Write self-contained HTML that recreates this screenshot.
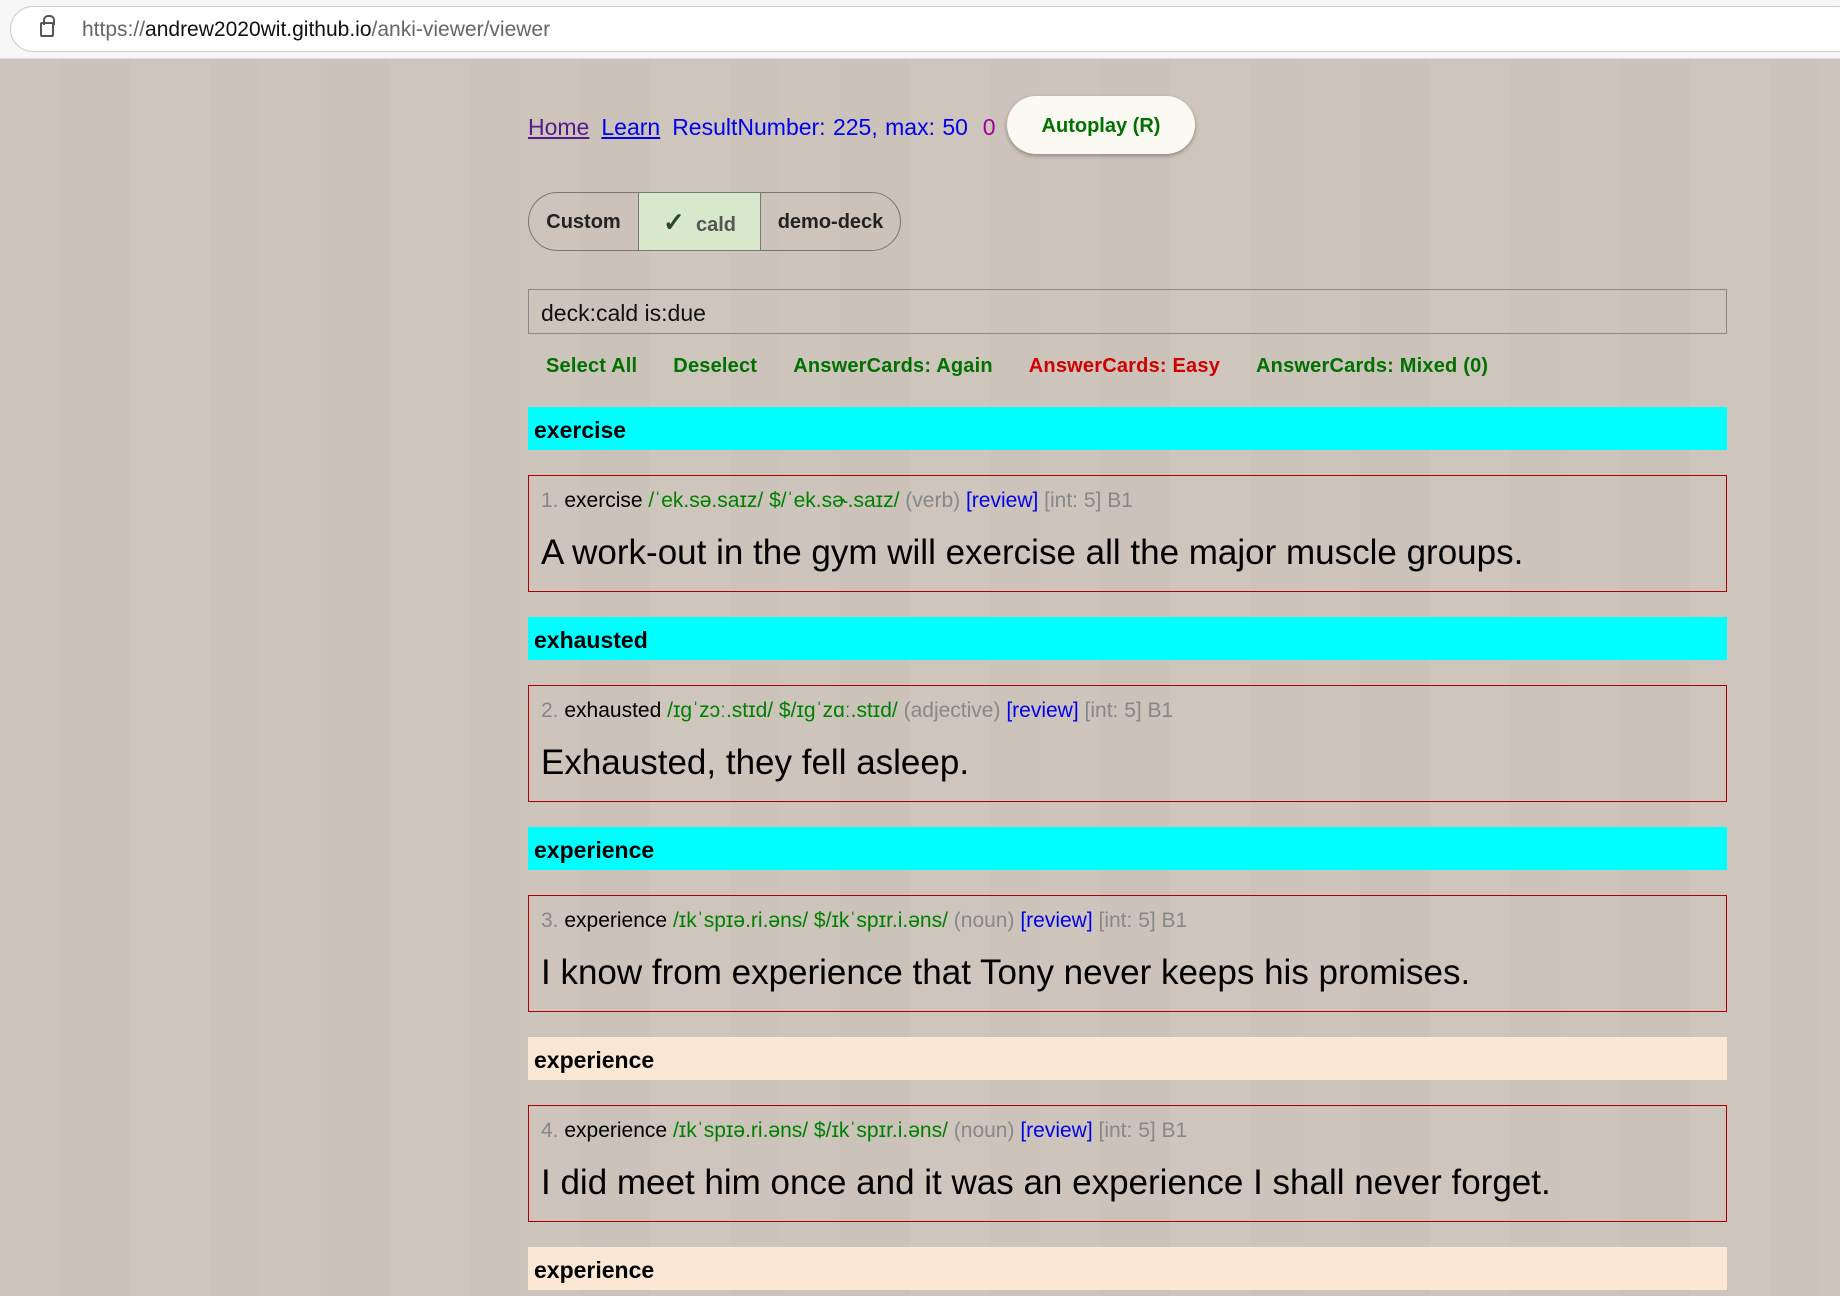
<!DOCTYPE html>
<html><head><meta charset="utf-8"><style>
*{box-sizing:border-box}
body{margin:0;width:1840px;height:1296px;overflow:hidden;font-family:"Liberation Sans",sans-serif;
background:repeating-linear-gradient(90deg,#cdc5bb 0 60px,#cbc3b9 60px 130px,#cec6bc 130px 210px,#ccc4ba 210px 260px);}
.bar{position:absolute;left:0;top:0;width:1840px;height:59px;background:#f7f7f7;border-bottom:1px solid #ddd}
.addr{position:absolute;left:10px;top:6px;width:1850px;height:46px;border:1px solid #ccc;border-radius:23px;background:#fff}
.url{position:absolute;left:82px;top:18px;font-size:21px;color:#666}
.url b{font-weight:normal;color:#111}
.lock{position:absolute;left:40px;width:14px;border:2px solid #555;border-radius:2px;top:22px;height:15px}
.lock:before{content:"";position:absolute;left:1px;top:-9px;width:8px;height:8px;border:2px solid #555;border-bottom:none;border-radius:5px 5px 0 0}
.nav{position:absolute;left:528px;top:114px;font-size:23px;color:#0000ee;word-spacing:1px}
.nav a{color:#0000ee;text-decoration:underline;margin-right:12px}
.auto{position:absolute;left:1007px;top:96px;width:188px;height:58px;border-radius:29px;background:#fafaf2;box-shadow:0 2px 4px rgba(0,0,0,.3);color:#007000;font-weight:bold;font-size:20px;text-align:center;line-height:60px}
.seg{position:absolute;left:528px;top:192px;width:373px;height:59px;border:1px solid #777;border-radius:30px;overflow:hidden;display:flex;font-weight:bold;font-size:20px;color:#222}
.seg div{line-height:59px;text-align:center}
.inp{position:absolute;left:528px;top:289px;width:1199px;height:45px;border:1px solid #888;font-size:23px;padding-left:12px;line-height:47px;color:#111}
.acts{position:absolute;left:546px;top:355px;font-size:20px;font-weight:bold;color:#007000;white-space:nowrap;letter-spacing:0.2px}
.acts span{margin-right:36px}
.h{position:absolute;left:528px;width:1199px;height:43px;background:#00ffff;font-weight:bold;font-size:23px;padding-left:6px;line-height:46px;color:#000}
.h.b{background:#fae8d4}
.c{position:absolute;left:528px;width:1199px;height:117px;border:1px solid #a00;padding-left:12px}
.m{position:absolute;top:13px;left:12px;font-size:21px;color:#888;white-space:nowrap}
.m .w{color:#000}.m .p{color:#008000}.m .r{color:#0000ee}
.s{position:absolute;top:57px;left:12px;font-size:35px;color:#000;white-space:nowrap}
</style></head><body>
<div class="bar"><div class="addr"></div><div class="lock"></div><div class="url">https://<b>andrew2020wit.github.io</b>/anki-viewer/viewer</div></div>
<div class="nav"><a style="color:#551a8b">Home</a><a>Learn</a>ResultNumber: 225, max: 50 &nbsp;<span style="color:#a000a0">0</span></div>
<div class="auto">Autoplay (R)</div>
<div class="seg"><div style="width:110px;border-right:1px solid #777">Custom</div><div style="width:122px;background:#d8e8cc;border-right:1px solid #777;color:#555"><span style="color:#2a4a2a;font-size:26px">✓</span>&nbsp;&nbsp;cald</div><div style="flex:1">demo-deck</div></div>
<div class="inp">deck:cald is:due</div>
<div class="acts"><span>Select All</span><span>Deselect</span><span>AnswerCards: Again</span><span style="color:#d00000">AnswerCards: Easy</span><span>AnswerCards: Mixed (0)</span></div>

<div class="h" style="top:407px">exercise</div>
<div class="c" style="top:475px"><div class="m">1. <span class="w">exercise</span> <span class="p">/ˈek.sə.saɪz/ $/ˈek.sɚ.saɪz/</span> (verb) <span class="r">[review]</span> [int: 5] B1</div><div class="s">A work-out in the gym will exercise all the major muscle groups.</div></div>

<div class="h" style="top:617px">exhausted</div>
<div class="c" style="top:685px"><div class="m">2. <span class="w">exhausted</span> <span class="p">/ɪɡˈzɔː.stɪd/ $/ɪɡˈzɑː.stɪd/</span> (adjective) <span class="r">[review]</span> [int: 5] B1</div><div class="s">Exhausted, they fell asleep.</div></div>

<div class="h" style="top:827px">experience</div>
<div class="c" style="top:895px"><div class="m">3. <span class="w">experience</span> <span class="p">/ɪkˈspɪə.ri.əns/ $/ɪkˈspɪr.i.əns/</span> (noun) <span class="r">[review]</span> [int: 5] B1</div><div class="s">I know from experience that Tony never keeps his promises.</div></div>

<div class="h b" style="top:1037px">experience</div>
<div class="c" style="top:1105px"><div class="m">4. <span class="w">experience</span> <span class="p">/ɪkˈspɪə.ri.əns/ $/ɪkˈspɪr.i.əns/</span> (noun) <span class="r">[review]</span> [int: 5] B1</div><div class="s">I did meet him once and it was an experience I shall never forget.</div></div>

<div class="h b" style="top:1247px">experience</div>
</body></html>
